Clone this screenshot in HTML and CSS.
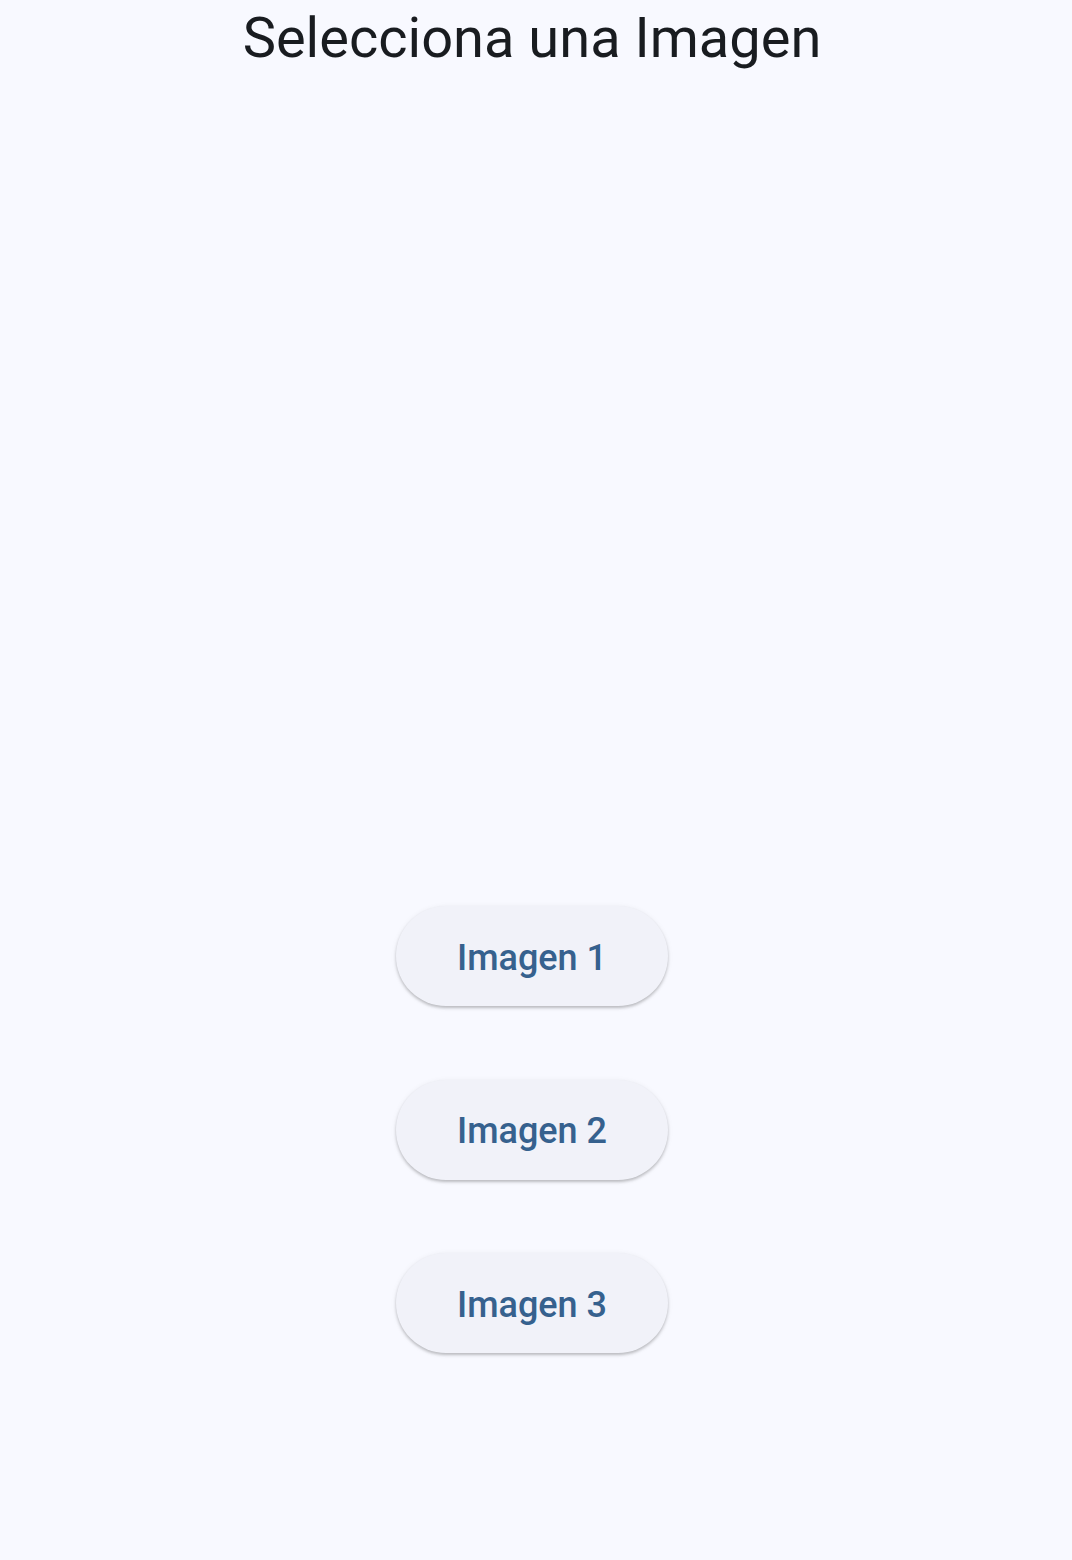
FILE: index.html
```html
<!DOCTYPE html>
<html lang="es">
<head>
<meta charset="utf-8">
<title>Selecciona una Imagen</title>
<link rel="stylesheet" href="styles.css">
</head>
<body>
<main class="page">
  <h1 class="title">Selecciona una Imagen</h1>
  <div class="image-area"></div>
  <div class="buttons">
    <button class="btn">Imagen 1</button>
    <button class="btn">Imagen 2</button>
    <button class="btn">Imagen 3</button>
  </div>
</main>
</body>
</html>
```
FILE: styles.css
```css
html, body {
  margin: 0;
  padding: 0;
  background: #f8f9ff;
}
body {
  font-family: Roboto, "Noto Sans", sans-serif;
  width: 1072px;
  height: 1560px;
  overflow: hidden;
}
.page {
  display: flex;
  flex-direction: column;
  align-items: center;
  padding-right: 8px;
}
.title {
  margin: 0;
  font-size: 56px;
  font-weight: 400;
  line-height: 76px;
  color: #191c20;
}
.image-area {
  height: 830px;
}
.buttons {
  display: flex;
  flex-direction: column;
  align-items: center;
  gap: 73.5px;
}
.btn {
  height: 100px;
  width: 272px;
  border: none;
  border-radius: 50px;
  background: #f1f2f9;
  color: #36618e;
  font-family: Roboto, sans-serif;
  font-size: 36px;
  font-weight: 500;
  letter-spacing: 0;
  box-shadow: 0 2px 3px rgba(0,0,0,0.22), 0 1px 6px rgba(0,0,0,0.06);
  padding: 3px 0 0 0;
}
```
